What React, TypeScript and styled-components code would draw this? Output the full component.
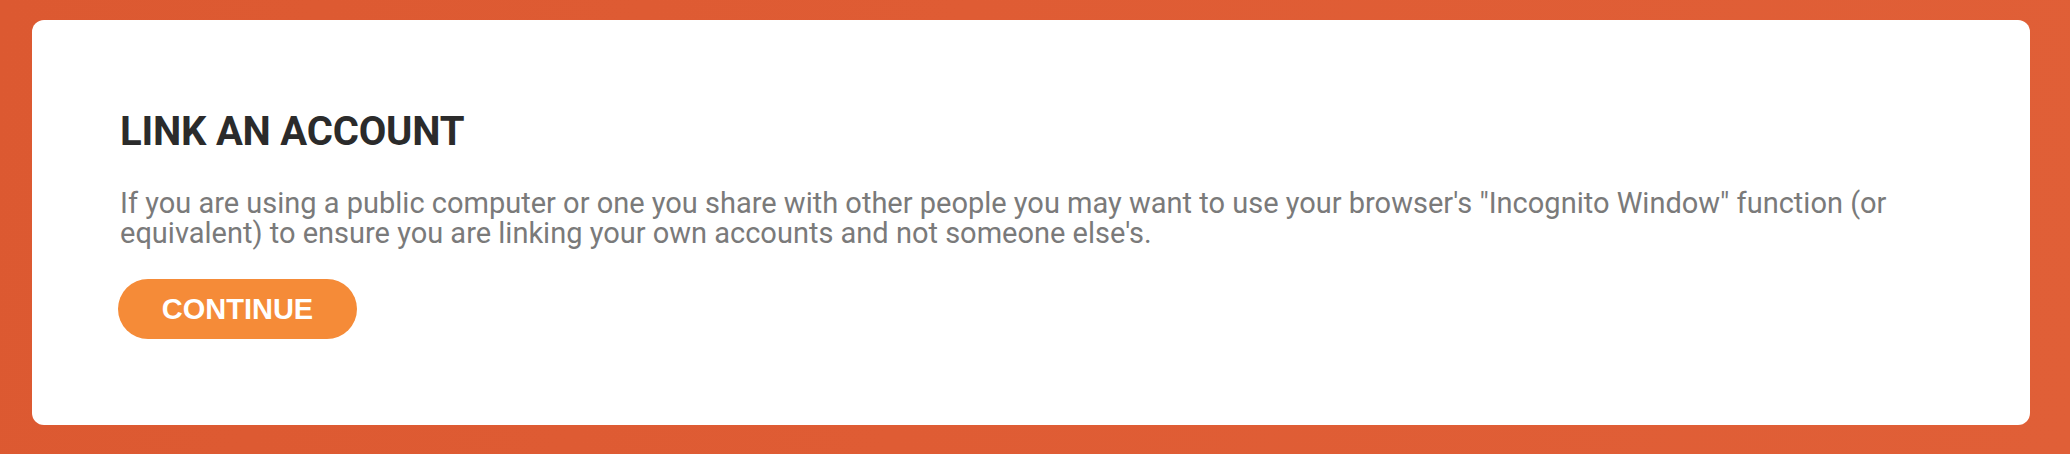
import React from "react";
import styled, { createGlobalStyle } from "styled-components";

const GlobalStyle = createGlobalStyle`
  html, body {
    margin: 0;
    padding: 0;
    background: #de5b33;
  }
  * { box-sizing: border-box; }
`;

const Page = styled.div`
  width: 2070px;
  height: 454px;
  padding: 20px 40px 29px 32px;
  background: linear-gradient(100deg, #dc5931 0%, #df5c34 45%, #e05f37 100%);
  display: flex;
  flex-direction: column;
`;

const Card = styled.section`
  width: 1998px;
  height: 405px;
  background: #ffffff;
  border-radius: 12px;
  padding: 92px 88px 0 88px;
  display: flex;
  flex-direction: column;
  align-items: flex-start;
`;

const Title = styled.h1`
  margin: 0;
  font-family: Roboto, "Liberation Sans", sans-serif;
  font-weight: 700;
  font-size: 40px;
  line-height: 40px;
  letter-spacing: -0.2px;
  color: #2b2b2b;
`;

const Text = styled.p`
  margin: 36px 0 0 0;
  font-family: Roboto, "Liberation Sans", sans-serif;
  font-weight: 400;
  font-size: 29px;
  line-height: 30px;
  color: #7a7a7a;
`;

const Button = styled.button`
  margin: 31px 0 0 -2px;
  width: 239px;
  height: 60px;
  border: none;
  border-radius: 30px;
  background: #f58b38;
  color: #ffffff;
  font-family: "Liberation Sans", Arial, sans-serif;
  font-weight: 700;
  font-size: 29px;
  line-height: 60px;
  padding: 0;
  text-align: center;
  cursor: pointer;
`;

export default function App() {
  return (
    <>
      <GlobalStyle />
      <Page>
        <Card>
          <Title>LINK AN ACCOUNT</Title>
          <Text>
            If you are using a public computer or one you share with other people you may want to use your browser's "Incognito Window" function (or equivalent) to ensure you are linking your own accounts and not someone else's.
          </Text>
          <Button>CONTINUE</Button>
        </Card>
      </Page>
    </>
  );
}
